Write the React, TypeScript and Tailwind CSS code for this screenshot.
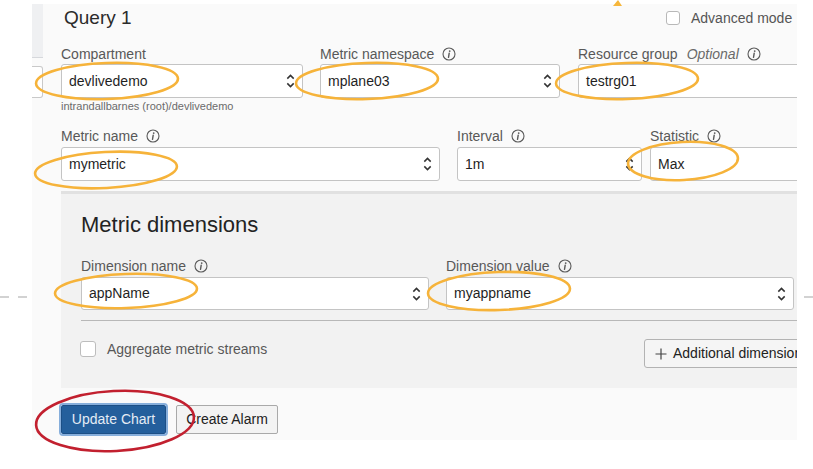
import type { ReactNode } from 'react';

function InfoIcon() {
  return (
    <svg width="14" height="14" viewBox="0 0 14 14" className="shrink-0">
      <circle cx="7" cy="7" r="6" fill="none" stroke="#5a5a5a" strokeWidth="1.1" />
      <circle cx="7.7" cy="4.1" r="0.9" fill="#5a5a5a" />
      <path d="M7.2 6.1 L6.5 10.4" stroke="#5a5a5a" strokeWidth="1.4" strokeLinecap="round" />
    </svg>
  );
}

function UpDown() {
  return (
    <svg width="9" height="16" viewBox="0 0 9 16" className="shrink-0">
      <path d="M1.3 5.6 L4.5 2.4 L7.7 5.6" fill="none" stroke="#333" strokeWidth="1.5" />
      <path d="M1.3 10.4 L4.5 13.6 L7.7 10.4" fill="none" stroke="#333" strokeWidth="1.5" />
    </svg>
  );
}

function Label({ text, optional, info = true }: { text: string; optional?: boolean; info?: boolean }) {
  return (
    <div className="flex items-center h-4 text-[14px] leading-4 text-[#585858] whitespace-nowrap">
      <span>{text}</span>
      {optional && <span className="ml-[9px] italic text-[#6a6a6a]">Optional</span>}
      {info && (
        <span className="ml-[8px] flex">
          <InfoIcon />
        </span>
      )}
    </div>
  );
}

function Select({ value, className, chevron = true }: { value: string; className: string; chevron?: boolean }) {
  return (
    <div
      className={`flex items-center justify-between bg-white border border-[#c4c4c4] rounded-[3px] pl-[7px] pr-[7px] text-[14px] text-[#1f1f1f] ${className}`}
    >
      <span>{value}</span>
      {chevron && <UpDown />}
    </div>
  );
}

function Field({ label, children, optional, info }: { label: string; children: ReactNode; optional?: boolean; info?: boolean }) {
  return (
    <div className="flex flex-col shrink-0">
      <Label text={label} optional={optional} info={info} />
      {children}
    </div>
  );
}

export default function App() {
  return (
    <div className="relative w-[813px] h-[469px] bg-white overflow-hidden font-['Liberation_Sans',Arial,sans-serif]">
      <div className="ml-[32px] pt-[4px]">
        <div className="w-[765px] h-[436px] bg-[#fafafa] flex overflow-hidden">
          {/* left edge of the neighbouring panel */}
          <div className="w-[11px] shrink-0 flex flex-col">
            <div className="h-[54px] bg-[#eff0f2] border-b border-[#d6d8dc]" />
            <div className="mt-[8px] h-[32px] bg-white border border-l-0 border-[#c9c9c9] rounded-r-[3px]" />
          </div>

          <div className="pl-[18px] flex-1 min-w-0 flex flex-col">
            {/* header */}
            <div className="h-[28px] flex items-center">
              <div className="pl-[3px] text-[19px] text-[#2b2b2b] w-[605px]">Query 1</div>
              <div className="flex items-center gap-[11px] text-[14px] text-[#555] whitespace-nowrap">
                <span className="w-[14px] h-[14px] bg-white border border-[#b8b8b8] rounded-[3px]" />
                <span>Advanced mode</span>
              </div>
            </div>

            {/* row 1 */}
            <div className="mt-[14px] flex items-start">
              <Field label="Compartment" info={false}>
                <Select value="devlivedemo" className="mt-[2px] w-[242px] h-[34px]" />
                <div className="mt-[2px] h-[12px] text-[11px] leading-[12px] text-[#6b6b6b]">
                  intrandallbarnes (root)/devlivedemo
                </div>
              </Field>
              <div className="ml-[17px]">
                <Field label="Metric namespace">
                  <Select value="mplane03" className="mt-[2px] w-[240px] h-[34px]" />
                </Field>
              </div>
              <div className="ml-[18px]">
                <Field label="Resource group" optional>
                  <Select value="testrg01" chevron={false} className="mt-[2px] w-[240px] h-[34px]" />
                </Field>
              </div>
            </div>

            {/* row 2 */}
            <div className="mt-[16px] flex items-start">
              <Field label="Metric name">
                <Select value="mymetric" className="mt-[3px] w-[379px] h-[34px]" />
              </Field>
              <div className="ml-[17px]">
                <Field label="Interval">
                  <Select value="1m" className="mt-[3px] w-[185px] h-[34px]" />
                </Field>
              </div>
              <div className="ml-[8px]">
                <Field label="Statistic">
                  <Select value="Max" chevron={false} className="mt-[3px] w-[200px] h-[34px]" />
                </Field>
              </div>
            </div>

            {/* dimensions */}
            <div className="mt-[10px] h-[197px] border-t-[3px] border-[#e1e1e1] bg-[#f2f2f2] pl-[20px] pt-[18px] w-[760px]">
              <div className="h-[26px] text-[22px] leading-[26px] text-[#232323]">Metric dimensions</div>
              <div className="mt-[20px] flex items-start">
                <Field label="Dimension name">
                  <Select value="appName" className="mt-[3px] w-[348px] h-[33px]" />
                </Field>
                <div className="ml-[17px]">
                  <Field label="Dimension value">
                    <Select value="myappname" className="mt-[3px] w-[348px] h-[33px]" />
                  </Field>
                </div>
              </div>
              <div className="mt-[10px] border-t border-[#b8b8b8]" />
              <div className="mt-[18px] h-[29px] flex items-start">
                <span className="mt-[2px] -ml-[1px] w-[16px] h-[16px] bg-white border border-[#bdbdbd] rounded-[3px] shrink-0" />
                <span className="mt-[2px] ml-[11px] text-[14px] leading-4 text-[#585858] w-[537px]">Aggregate metric streams</span>
                <div className="h-[29px] flex items-center gap-[6px] pl-[10px] pr-[10px] bg-[#f5f5f5] border border-[#b3b3b3] rounded-[3px] text-[14px] text-[#222] whitespace-nowrap">
                  <svg width="12" height="12" viewBox="0 0 12 12">
                    <path d="M6 0.5 V11.5 M0.5 6 H11.5" stroke="#444" strokeWidth="1.2" />
                  </svg>
                  <span>Additional dimension</span>
                </div>
              </div>
            </div>

            {/* actions */}
            <div className="mt-[17px] flex items-center gap-[10px]">
              <button className="h-[29px] w-[105px] bg-[#245f9c] border border-[#1c4f86] rounded-[2px] outline-2 outline-[#86aedb] text-[14px] text-[#e4ecf5]">
                Update Chart
              </button>
              <button className="h-[29px] w-[102px] bg-[#f3f3f3] border border-[#a9a9a9] rounded-[2px] text-[14px] text-[#222]">
                Create Alarm
              </button>
            </div>
          </div>
        </div>
      </div>

      {/* annotation overlay */}
      <svg className="absolute inset-0 pointer-events-none" width="813" height="469" viewBox="0 0 813 469">
        <path d="M0 297 H28" stroke="#d2d2d2" strokeWidth="2" strokeDasharray="9 9" />
        <path d="M804 297 H813" stroke="#d2d2d2" strokeWidth="2" />
        <polygon points="613,6 622,6 618,0" fill="#f6b63a" />
        <g fill="none" stroke="#f6b33a" strokeWidth="2.6">
          <ellipse cx="107" cy="81" rx="71" ry="18" transform="rotate(-2 107 81)" />
          <ellipse cx="367" cy="81" rx="71" ry="18" transform="rotate(-2 367 81)" />
          <ellipse cx="627" cy="81" rx="71" ry="18" transform="rotate(-2 627 81)" />
          <ellipse cx="106" cy="170" rx="71" ry="18" transform="rotate(-3 106 170)" />
          <ellipse cx="683" cy="161" rx="55" ry="19" transform="rotate(-3 683 161)" />
          <ellipse cx="126" cy="291" rx="71" ry="17" transform="rotate(-2 126 291)" />
          <ellipse cx="499" cy="291" rx="71" ry="19" transform="rotate(-2 499 291)" />
        </g>
        <ellipse cx="115" cy="421" rx="79" ry="30" fill="none" stroke="#c2202f" strokeWidth="2.6" transform="rotate(-3 115 421)" />
      </svg>
    </div>
  );
}
